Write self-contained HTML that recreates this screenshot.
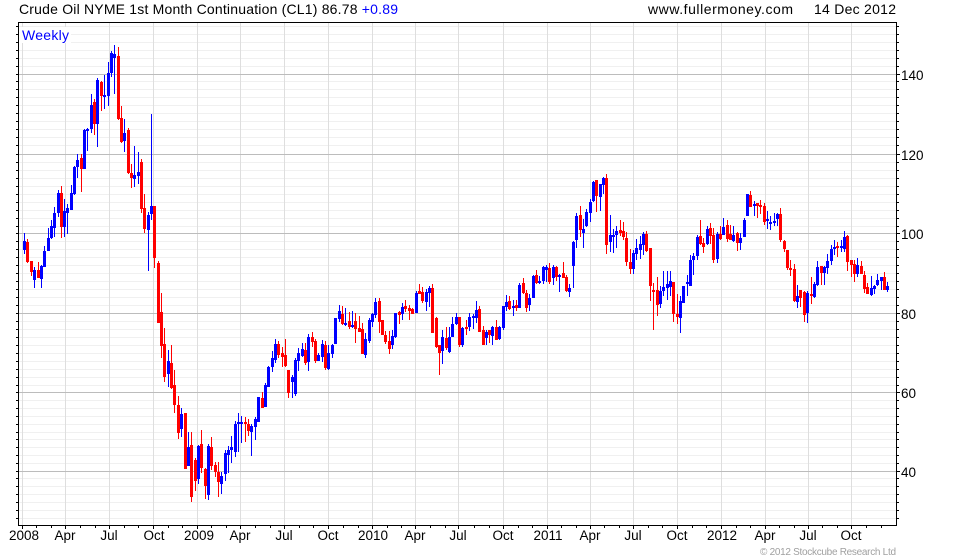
<!DOCTYPE html>
<html>
<head>
<meta charset="utf-8">
<style>
html,body{margin:0;padding:0;background:#fff;width:980px;height:560px;overflow:hidden}
svg{display:block}
text{font-family:"Liberation Sans",Arial,sans-serif;font-size:13.5px;fill:#000}
.x{text-anchor:middle}
</style>
</head>
<body>
<svg id="s" xmlns="http://www.w3.org/2000/svg" width="980" height="560" viewBox="0 0 980 560">
<g id="g" shape-rendering="crispEdges"></g>
<text x="19" y="14" textLength="379" lengthAdjust="spacing" style="font-size:14px">Crude Oil NYME 1st Month Continuation (CL1) 86.78 <tspan fill="#0000ff">+0.89</tspan></text>
<text x="648" y="14" textLength="145" lengthAdjust="spacing" style="font-size:14px">www.fullermoney.com</text>
<text x="814" y="14" textLength="82" lengthAdjust="spacing" style="font-size:14px">14 Dec 2012</text>
<text x="22" y="40" textLength="47" lengthAdjust="spacing" fill="#0000ff" style="font-size:14px;fill:#0000ff">Weekly</text>
<text x="901" y="80">140</text>
<text x="901" y="160">120</text>
<text x="901" y="239">100</text>
<text x="901" y="319">80</text>
<text x="901" y="398">60</text>
<text x="901" y="477">40</text>
<text class="x" x="24" y="540">2008</text>
<text class="x" x="65" y="540">Apr</text>
<text class="x" x="109" y="540">Jul</text>
<text class="x" x="154" y="540">Oct</text>
<text class="x" x="199" y="540">2009</text>
<text class="x" x="240" y="540">Apr</text>
<text class="x" x="284" y="540">Jul</text>
<text class="x" x="328" y="540">Oct</text>
<text class="x" x="373" y="540">2010</text>
<text class="x" x="415" y="540">Apr</text>
<text class="x" x="458" y="540">Jul</text>
<text class="x" x="503" y="540">Oct</text>
<text class="x" x="548" y="540">2011</text>
<text class="x" x="590" y="540">Apr</text>
<text class="x" x="633" y="540">Jul</text>
<text class="x" x="677" y="540">Oct</text>
<text class="x" x="722" y="540">2012</text>
<text class="x" x="765" y="540">Apr</text>
<text class="x" x="808" y="540">Jul</text>
<text class="x" x="851" y="540">Oct</text>
<text x="760" y="555" textLength="136" lengthAdjust="spacing" style="font-size:10px;fill:#a0a0a0">© 2012 Stockcube Research Ltd</text>
</svg>
<script>
var g=document.getElementById('g'),o='';
function R(x,y,w,h,c){o+='<rect x="'+x+'" y="'+y+'" width="'+w+'" height="'+h+'" fill="'+c+'"/>';}
var minor=[26,34,42,50,58,66,81,89,97,105,113,121,129,137,145,162,170,178,186,194,202,210,218,226,241,249,257,265,273,281,289,297,305,321,329,337,345,353,361,369,377,385,400,408,416,424,432,439,447,455,463,478,486,494,502,510,518];
var major=[74,154,233,313,392,471];
var vert=[22,65,109,153,197,240,284,328,372,415,458,503,547,590,633,677,721,765,808,851];
minor.forEach(function(y){R(19,y,877,1,'#f0f0f0')});
vert.forEach(function(x){R(x,23,1,502,'#dedede')});
major.forEach(function(y){R(19,y,877,1,'#bcbcbc')});
R(19,27,52,16,'#ffffff');
var d="b24 233 254 241 250,r27 239 263 242 262,r31 261 276 261 272,b34 267 288 270 280,r38 262 278 270 278,b41 265 288 266 279,b44 246 267 251 267,b48 228 251 238 251,b51 220 239 226 238,b54 207 237 213 228,b58 190 217 193 213,r61 186 238 193 227,b64 199 237 211 227,b67 204 234 208 213,b71 185 210 193 210,b74 166 195 167 194,b77 154 178 160 167,r81 154 192 158 169,b84 129 169 130 169,b87 128 151 129 131,b91 94 133 105 129,r94 99 135 102 124,b97 78 147 80 124,r101 81 111 82 96,b104 75 109 95 97,b108 62 106 73 96,b111 51 77 53 73,b114 45 94 54 58,r118 47 120 56 119,r121 106 143 118 142,b124 119 152 133 141,r128 128 174 130 173,r131 164 188 173 178,b134 146 187 175 179,b138 152 184 172 176,r141 159 213 162 209,r144 194 233 208 229,b148 212 271 215 230,b151 114 220 206 214,r154 206 268 206 258,r158 261 323 263 323,r161 293 358 312 346,r164 328 382 344 377,b168 350 387 361 374,r171 345 389 363 388,r174 370 413 385 405,r178 396 439 405 433,b181 408 437 414 429,r185 413 469 413 469,b188 432 466 447 466,r191 432 502 445 497,r195 458 491 460 481,b198 445 484 446 479,r201 430 473 444 468,r205 468 499 469 486,b208 444 500 446 495,r211 437 470 447 466,r215 462 477 465 472,r218 462 497 472 482,b221 472 494 476 484,b225 450 481 453 474,b228 446 473 450 455,b231 436 463 447 450,b235 421 457 424 452,b238 413 452 422 424,b241 416 443 422 424,r245 417 442 422 424,r248 419 436 424 431,b251 424 456 426 432,b255 417 440 419 427,b258 397 422 397 422,r262 392 408 398 408,b265 383 407 385 407,b268 366 387 367 387,b272 351 372 358 367,b275 339 363 344 360,r278 341 358 344 355,r282 347 367 353 357,r285 339 367 355 366,r288 370 398 370 393,b292 375 398 377 382,b295 358 396 360 394,b298 348 371 353 361,b302 343 357 349 356,r305 343 365 350 363,b308 334 371 337 362,r312 332 347 337 342,r315 339 363 341 361,b318 353 361 355 361,b322 340 362 344 357,r325 341 370 345 368,b328 345 370 353 369,b332 344 358 345 354,b335 318 344 318 344,b339 305 322 311 319,r342 306 325 314 324,b345 308 326 323 325,r349 312 329 321 327,b352 311 328 325 327,r355 313 343 321 329,r359 316 332 328 332,r362 323 354 329 354,b365 333 358 339 355,b369 318 343 320 341,b372 313 327 314 322,b375 298 318 302 315,r379 298 333 301 322,r382 320 335 320 335,r385 331 344 335 342,r389 331 354 341 349,b392 330 349 336 345,b395 313 338 313 337,r399 311 324 312 315,b402 303 320 307 314,r405 300 312 306 309,r409 305 320 308 311,r412 308 314 309 314,b416 291 313 293 313,r419 284 294 291 294,r422 287 303 292 301,b426 289 311 292 302,b429 286 307 288 293,r432 284 333 288 333,r436 317 348 318 347,r439 345 375 345 353,b442 330 364 337 351,r446 327 350 338 348,b449 327 353 337 352,b452 317 337 324 337,b456 313 325 317 324,r459 317 347 317 345,b462 327 347 328 345,r466 320 335 327 329,b469 313 331 317 327,b473 314 329 316 318,b476 301 323 310 318,r479 306 332 309 332,r483 326 345 330 345,b486 330 345 332 338,r489 330 343 330 335,b492 326 345 327 336,r496 320 340 327 340,b499 326 340 327 339,b503 306 330 306 328,b506 295 311 302 307,r509 296 310 301 309,b513 300 316 306 308,r516 300 311 305 308,b519 283 308 285 308,r523 278 294 283 293,r526 290 312 293 308,b529 294 311 298 305,b533 275 298 276 298,r536 270 284 275 283,b539 276 284 281 283,b543 266 284 267 281,b546 265 282 267 270,r549 263 284 268 282,b553 265 285 267 278,r556 266 281 267 277,b559 274 292 275 277,r563 262 278 273 278,r566 275 292 277 291,b569 284 297 288 292,b573 241 288 242 266,b576 213 248 216 240,r580 206 237 215 230,b583 219 248 229 233,b586 209 227 212 226,b590 199 222 202 213,b593 181 202 182 201,r596 180 212 180 196,b600 184 211 184 197,b603 177 194 178 185,r606 174 254 178 245,b610 215 252 235 242,b613 229 253 235 237,b616 226 248 231 235,r620 220 236 230 233,r623 222 240 231 237,r626 232 266 238 262,r630 249 274 262 269,b633 250 274 253 269,b636 239 260 248 254,b640 236 259 244 250,b643 232 255 234 245,r646 231 252 234 251,r650 248 301 248 286,r653 283 330 290 292,r657 277 316 290 305,b660 286 308 291 304,b663 271 296 287 291,b667 271 300 284 288,b670 271 296 281 287,r673 282 322 282 314,r677 294 324 314 317,b680 296 333 301 318,b683 286 303 286 303,b687 275 296 282 284,b690 255 286 260 286,b693 253 275 256 260,b697 235 260 237 256,r700 220 245 236 244,r703 238 253 243 247,b707 226 245 229 244,r710 223 244 228 236,r713 228 263 235 260,b717 232 263 234 259,r720 226 240 234 239,b723 218 235 227 235,r727 220 242 225 239,r730 225 240 234 240,b733 226 242 235 241,r737 232 251 233 243,b740 233 250 238 243,b744 218 237 220 237,b747 194 216 194 216,r750 191 207 195 207,b754 201 216 204 206,r757 203 218 203 206,r760 200 214 205 207,r764 203 225 206 222,b767 211 229 219 221,b770 216 230 222 223,b774 213 226 221 223,b777 213 226 214 219,r780 208 242 214 240,r784 240 252 241 249,r787 250 270 250 268,r790 260 276 268 270,r794 264 302 269 301,b797 285 308 296 302,r800 290 307 290 298,r804 291 322 292 315,b807 291 323 293 313,r811 277 304 294 296,b814 282 298 284 297,b817 261 286 267 285,r821 266 285 266 273,b824 266 285 267 273,b827 254 274 261 268,b831 245 265 249 261,b834 240 255 247 249,r837 242 257 246 248,b841 240 252 246 248,b844 231 252 237 249,r847 235 271 236 262,r851 260 277 260 265,r854 260 282 264 274,b857 258 277 265 274,r861 261 274 266 274,r864 271 293 275 289,r867 283 294 287 294,b871 276 296 288 295,b874 285 294 286 289,b877 274 286 280 285,b881 277 290 277 281,r884 272 290 277 290,b887 282 292 286 290".split(',');
d.forEach(function(s){
  var c=s[0]=='b'?'#0000ff':'#ff0000',p=s.slice(1).split(' ').map(Number);
  R(p[0],p[1],1,p[2]-p[1],c);
  R(p[0]-1,p[3],3,Math.max(p[4]-p[3],2),c);
});
R(18,22,879,1,'#000');R(18,525,879,1,'#000');R(18,22,1,504,'#000');R(896,22,1,504,'#000');
minor.concat(major).forEach(function(y){R(16,y,2,1,'#000');R(897,y,major.indexOf(y)>=0?3:2,1,'#000')});
vert.forEach(function(x){R(x,526,1,3,'#000')});
var mt=[36,51,80,95,124,138,168,182,211,226,255,270,299,313,343,358,387,401,430,445,474,489,518,532,561,576,604,619,648,662,692,706,736,750,779,794,822,837,866,881];
mt.forEach(function(x){R(x,526,1,2,'#000')});
g.innerHTML=o;
</script>
</body>
</html>
